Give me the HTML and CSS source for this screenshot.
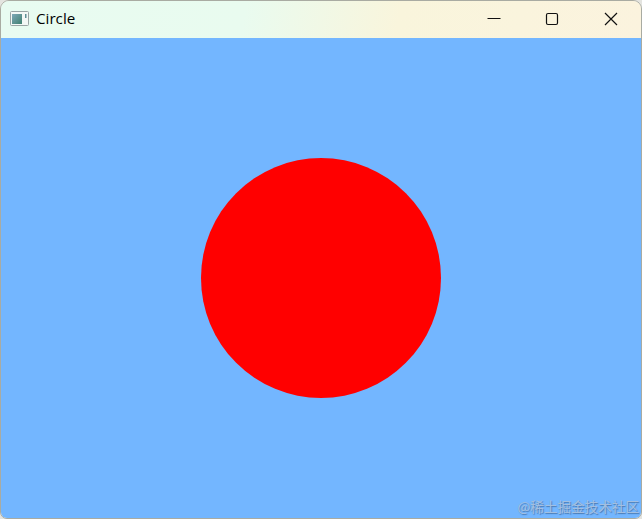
FILE: index.html
```html
<!DOCTYPE html>
<html lang="zh">
<head>
<meta charset="utf-8">
<title>Circle</title>
<link rel="stylesheet" href="styles.css">
</head>
<body>
<div class="window">
  <header class="titlebar">
    <svg class="app-icon" width="20" height="16" viewBox="0 0 20 16">
      <defs>
        <linearGradient id="g" x1="0" y1="0" x2="1" y2="1">
          <stop offset="0" stop-color="#7fa8b8"/>
          <stop offset="1" stop-color="#3f8070"/>
        </linearGradient>
      </defs>
      <rect x="0.5" y="0.5" width="18" height="14" rx="1" fill="#f4f8f6" stroke="#9aa5a5"/>
      <rect x="2" y="3" width="10" height="10" fill="url(#g)"/>
      <rect x="15" y="3" width="1.5" height="4" fill="#5f8f96"/>
    </svg>
    <span class="title">Circle</span>
    <div class="controls">
      <button class="ctl" aria-label="Minimize"><svg width="14" height="14" viewBox="0 0 14 14"><path d="M0.5 6.5h13" stroke="#111" stroke-width="1.1" fill="none"/></svg></button>
      <button class="ctl" aria-label="Maximize"><svg width="14" height="14" viewBox="0 0 14 14"><rect x="1.5" y="1.5" width="11" height="11" rx="1.5" stroke="#111" stroke-width="1.2" fill="none"/></svg></button>
      <button class="ctl" aria-label="Close"><svg width="14" height="14" viewBox="0 0 14 14"><path d="M1 1l12 12M13 1L1 13" stroke="#111" stroke-width="1.2" fill="none"/></svg></button>
    </div>
  </header>
  <main class="content">
    <div class="circle"></div>
    <span class="watermark">@稀土掘金技术社区</span>
  </main>
</div>
</body>
</html>
```
FILE: styles.css
```css
html, body {
  margin: 0;
  padding: 0;
  height: 100%;
  background: #e4e4e0;
  overflow: hidden;
}
.window {
  box-sizing: border-box;
  height: 519px;
  display: flex;
  flex-direction: column;
  border: 1px solid #a9aba2;
  border-radius: 9px 9px 7px 7px;
  overflow: hidden;
  font-family: "Open Sans", "Noto Sans", sans-serif;
}
.titlebar {
  flex: 0 0 37px;
  display: flex;
  align-items: center;
  padding-left: 9px;
  background: linear-gradient(100deg, #e8fbf1 0%, #e9fbef 38%, #f9f5dc 62%, #fbf3de 100%);
}
.app-icon {
  flex: none;
  margin-right: 6px;
  margin-top: -2px;
}
.title {
  font-size: 15.2px;
  line-height: 20px;
  margin-top: -3px;
  color: #000;
}
.controls {
  margin-left: auto;
  margin-top: -2px;
  padding-right: 1px;
  display: flex;
}
.ctl {
  width: 58.5px;
  height: 37px;
  padding: 0;
  border: 0;
  background: none;
  display: flex;
  align-items: center;
  justify-content: center;
}
.content {
  flex: 1;
  position: relative;
  display: flex;
  align-items: center;
  justify-content: center;
  background: #73b6ff;
}
.circle {
  width: 240px;
  height: 240px;
  border-radius: 50%;
  background: #ff0000;
}
.watermark {
  position: absolute;
  right: 2px;
  bottom: 3px;
  font-family: "Noto Sans CJK SC", sans-serif;
  font-size: 13.6px;
  line-height: 18px;
  color: #a3bfe0;
  text-shadow: 1px 1px 1px rgba(50, 90, 140, 0.65);
}
```
